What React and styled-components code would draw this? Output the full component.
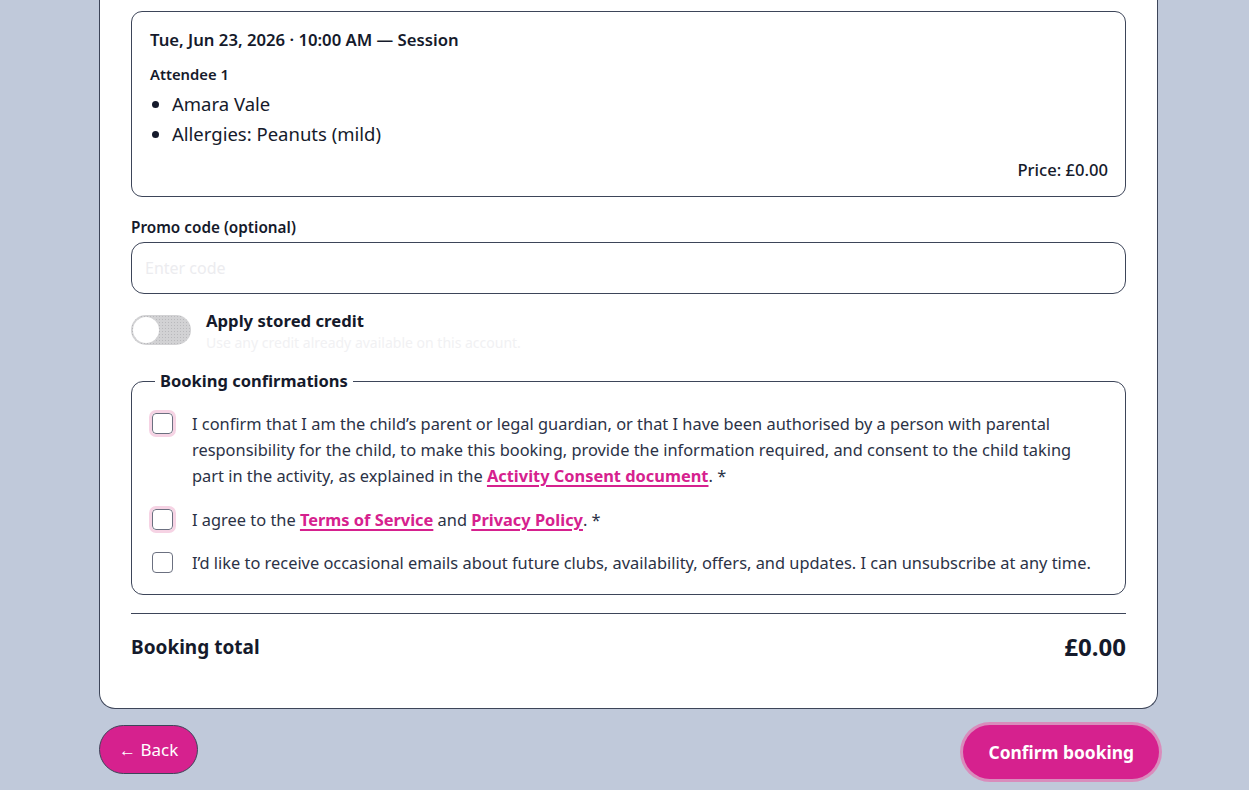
import React from "react";
import styled, { createGlobalStyle } from "styled-components";

const GlobalStyle = createGlobalStyle`
  * { box-sizing: border-box; }
  body {
    margin: 0;
    background: #c0c9da;
    font-family: "Noto Sans", "Open Sans", sans-serif;
    color: #151a2b;
  }
`;

const Page = styled.div`
  width: 1059px;
  margin-left: 99px;
  padding-bottom: 20px;
`;

const Card = styled.div`
  background: #fff;
  border: 1px solid #3d4559;
  border-top: none;
  border-radius: 0 0 16px 16px;
  padding: 11px 31px 45px;
`;

const Session = styled.div`
  border: 1px solid #3d4559;
  border-radius: 11px;
  padding: 16px 17px 14px 18px;
`;

const SessionTitle = styled.div`
  font-size: 16.7px;
  font-weight: 600;
  line-height: 24px;
`;

const AttendeeLabel = styled.div`
  margin-top: 12px;
  font-size: 14.8px;
  font-weight: 600;
  line-height: 20px;
`;

const List = styled.ul`
  margin: 5px 0 0;
  padding-left: 22px;
  font-size: 18.5px;
  line-height: 30px;
`;

const Price = styled.div`
  margin-top: 9px;
  text-align: right;
  font-size: 16.6px;
  font-weight: 500;
  line-height: 24px;
`;

const Label = styled.label`
  display: block;
  margin-top: 20px;
  font-size: 15.3px;
  font-weight: 600;
  line-height: 20px;
`;

const Input = styled.input`
  display: block;
  width: 100%;
  height: 52px;
  margin-top: 5px;
  padding: 0 13px;
  border: 1px solid #3d4559;
  border-radius: 13px;
  font-family: inherit;
  font-size: 16px;
  &::placeholder { color: #ececef; }
`;

const ToggleRow = styled.div`
  display: flex;
  gap: 15px;
  margin-top: 21px;
`;

const Track = styled.span`
  position: relative;
  flex: none;
  width: 60px;
  height: 30px;
  border-radius: 15px;
  background-color: #d2d2d4;
  background-image: radial-gradient(#b9b9bc 0.7px, transparent 0.8px);
  background-size: 3px 3px;
`;

const Knob = styled.span`
  position: absolute;
  top: 2px;
  left: 2px;
  width: 26px;
  height: 26px;
  border-radius: 50%;
  background: #fff;
`;

const ToggleTitle = styled.div`
  font-size: 16.7px;
  font-weight: 700;
  line-height: 22px;
  margin-top: -5px;
`;

const ToggleHint = styled.div`
  font-size: 14px;
  line-height: 22px;
  color: #f1f1f3;
`;

const Fieldset = styled.fieldset`
  margin: 16px 0 0;
  padding: 14px 20px 13px;
  border: 1px solid #3d4559;
  border-radius: 12px;
`;

const Legend = styled.legend`
  margin-left: 3px;
  padding: 0 5px;
  font-size: 16.5px;
  font-weight: 700;
  line-height: 22px;
`;

const Check = styled.label`
  display: flex;
  gap: 19px;
  align-items: flex-start;
  font-size: 16.4px;
  line-height: 26px;
  color: #2b3246;
  padding: 5px 0;
  & + & { margin-top: 8px; }
  & + & + & { margin-top: 7px; }
`;

const Box = styled.span`
  flex: none;
  width: 21px;
  height: 21px;
  margin-top: 2px;
  border: 1.5px solid #6b7080;
  border-radius: 4px;
  background: #fff;
  outline: ${(p) => (p.$required ? "3px solid #f6d3e4" : "none")};
`;

const Link = styled.a`
  color: #d6218e;
  font-weight: 700;
  text-decoration: underline;
  text-underline-offset: 3px;
  text-decoration-thickness: 2px;
`;

const Divider = styled.hr`
  margin: 18px 0 0;
  border: none;
  border-top: 1px solid #3d4559;
`;

const TotalRow = styled.div`
  display: flex;
  justify-content: space-between;
  align-items: center;
  margin-top: 16px;
`;

const TotalLabel = styled.div`
  font-size: 19px;
  font-weight: 700;
`;

const TotalValue = styled.div`
  font-size: 24px;
  font-weight: 700;
`;

const Actions = styled.div`
  display: flex;
  justify-content: space-between;
  align-items: flex-start;
  margin-top: 16px;
`;

const Button = styled.button`
  height: ${(p) => (p.$primary ? "54px" : "49px")};
  padding: 0 ${(p) => (p.$primary ? "25px" : "19px")};
  border-radius: 999px;
  background: #d6218e;
  color: #fff;
  font-family: inherit;
  font-size: ${(p) => (p.$primary ? "17.4px" : "17px")};
  font-weight: ${(p) => (p.$primary ? 700 : 400)};
  border: ${(p) => (p.$primary ? "none" : "1px solid #3d4559")};
  box-shadow: ${(p) => (p.$primary ? "0 0 0 3px #d98cbc" : "none")};
  margin-right: ${(p) => (p.$primary ? "-1px" : "0")};
`;

export default function App() {
  return (
    <>
      <GlobalStyle />
      <Page>
        <Card>
          <Session>
            <SessionTitle>Tue, Jun 23, 2026 · 10:00 AM — Session</SessionTitle>
            <AttendeeLabel>Attendee 1</AttendeeLabel>
            <List>
              <li>Amara Vale</li>
              <li>Allergies: Peanuts (mild)</li>
            </List>
            <Price>Price: £0.00</Price>
          </Session>

          <Label>Promo code (optional)</Label>
          <Input placeholder="Enter code" />

          <ToggleRow>
            <Track>
              <Knob />
            </Track>
            <div>
              <ToggleTitle>Apply stored credit</ToggleTitle>
              <ToggleHint>Use any credit already available on this account.</ToggleHint>
            </div>
          </ToggleRow>

          <Fieldset>
            <Legend>Booking confirmations</Legend>
            <Check>
              <Box $required />
              <span>
                I confirm that I am the child’s parent or legal guardian, or that I have been
                authorised by a person with parental responsibility for the child, to make this
                booking, provide the information required, and consent to the child taking part in
                the activity, as explained in the <Link>Activity Consent document</Link>. *
              </span>
            </Check>
            <Check>
              <Box $required />
              <span>
                I agree to the <Link>Terms of Service</Link> and <Link>Privacy Policy</Link>. *
              </span>
            </Check>
            <Check>
              <Box />
              <span>
                I’d like to receive occasional emails about future clubs, availability, offers, and
                updates. I can unsubscribe at any time.
              </span>
            </Check>
          </Fieldset>

          <Divider />
          <TotalRow>
            <TotalLabel>Booking total</TotalLabel>
            <TotalValue>£0.00</TotalValue>
          </TotalRow>
        </Card>
        <Actions>
          <Button>← Back</Button>
          <Button $primary>Confirm booking</Button>
        </Actions>
      </Page>
    </>
  );
}
